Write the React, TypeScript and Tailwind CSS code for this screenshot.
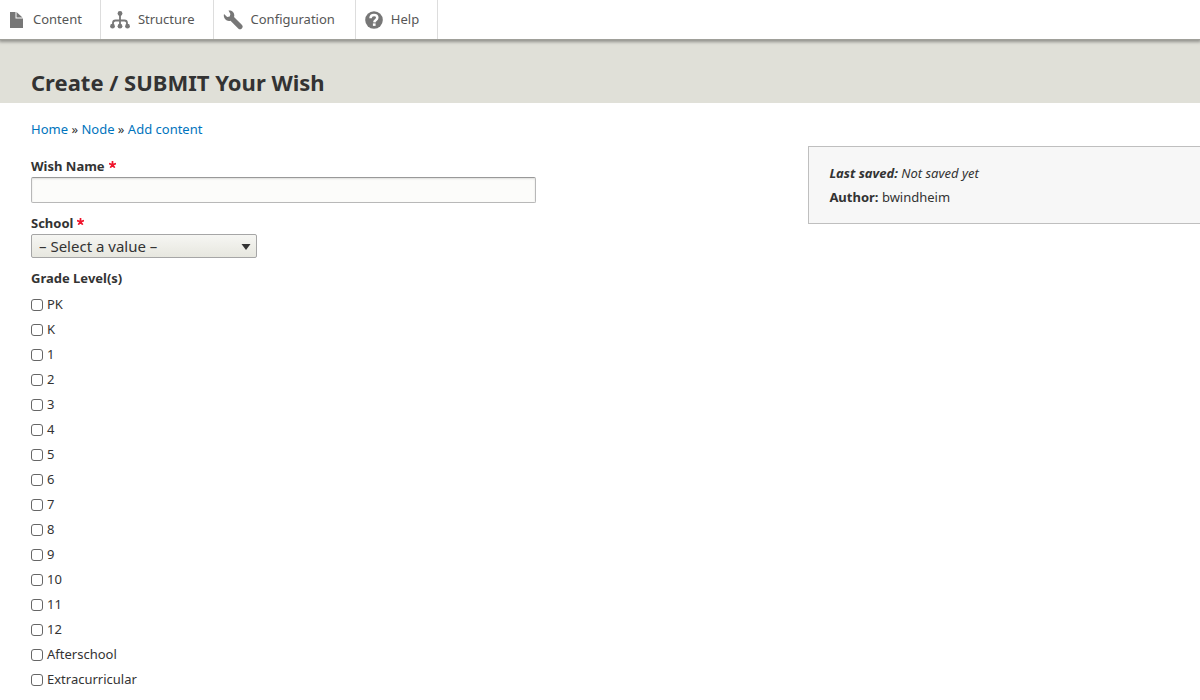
import React, { useState } from "react";

const gradeLevels = [
    "PK", "K", "1", "2", "3", "4", "5", "6", "7", "8", "9", "10", "11", "12",
    "Afterschool", "Extracurricular",
];

function FileIcon() {
    return (
        <svg width="14" height="18" viewBox="0 0 14 18" fill="#777" aria-hidden="true">
            <path d="M1 1h5.500v6.500H14V17H1z" />
            <path d="M7.500 1 13.500 6.500h-6z" />
        </svg>
    );
}

function StructureIcon() {
    return (
        <svg width="20" height="18" viewBox="0 0 20 18" fill="#777" aria-hidden="true">
            <path d="M10 3v12M3 15v-3q0-2.500 2.500-2.500h9q2.500 0 2.500 2.500v3" fill="none" stroke="#777" strokeWidth="1.800" />
            <circle cx="10" cy="2.500" r="2.400" />
            <circle cx="2.500" cy="15.200" r="2.400" />
            <circle cx="10" cy="15.200" r="2.400" />
            <circle cx="17.500" cy="15.200" r="2.400" />
        </svg>
    );
}

function WrenchIcon() {
    return (
        <svg width="20" height="20" viewBox="0 0 20 20" aria-hidden="true">
            <path
                d="M5.500.6C8.500.1 11.200 2.200 11.300 5.200c0 .7-.1 1.200-.3 1.800l7.800 7.800a2.500 2.500 0 0 1-3.600 3.600L7.500 10.700C4.200 11.800.8 9.200.8 5.600c0-.6.1-1.100.2-1.600l3.200 3.100 2.500-.6.700-2.600z"
                fill="#777"
            />
        </svg>
    );
}

function HelpIcon() {
    return (
        <svg width="18" height="18" viewBox="0 0 18 18" aria-hidden="true">
            <circle cx="9" cy="9" r="8.800" fill="#777" />
            <path d="M5.500 7.200C5.600 5 7 4 9 4c2 0 3.300 1.100 3.300 2.700 0 2.300-2.800 2.200-3 4.600" fill="none" stroke="#fff" strokeWidth="2.500" />
            <path d="M7.900 12.400h2.700v2.500H7.900z" fill="#fff" />
        </svg>
    );
}

function Required() {
    return (
        <svg className="inline-block ml-1 mb-1.5" width="7" height="7" viewBox="0 0 7 7" role="img" aria-label="required">
            <path d="M3.500 3.700V0M3.500 3.700 0 2.500M3.500 3.700 7 2.500M3.500 3.700 1.300 6.700M3.500 3.700 5.700 6.700" stroke="#f0142c" strokeWidth="1.700" />
        </svg>
    );
}

function ToolbarLink({ icon, label, className }) {
    return (
        <a href="#" className={`flex items-center pl-[9px] border-r border-[#ddd] text-[#565656] ${className}`}>
            {icon}
            <span>{label}</span>
        </a>
    );
}

export default function App() {
    const [wishName, setWishName] = useState("");
    const [grades, setGrades] = useState([]);

    const toggleGrade = (grade) => {
        setGrades(grades.includes(grade) ? grades.filter((g) => g !== grade) : [...grades, grade]);
    };

    return (
        <div className="min-h-screen overflow-hidden bg-white font-['Noto_Sans','Lucida_Grande',sans-serif] text-[13px] text-[#333]">
            <nav className="relative flex h-10 bg-white border-b border-[#a0a09a] shadow-[0_1px_3px_1px_rgba(0,0,0,0.35)]">
                <ToolbarLink icon={<FileIcon />} label="Content" className="gap-2.5 pr-[18px]" />
                <ToolbarLink icon={<StructureIcon />} label="Structure" className="gap-2 pr-[18px]" />
                <ToolbarLink icon={<WrenchIcon />} label="Configuration" className="gap-2 pr-5" />
                <ToolbarLink icon={<HelpIcon />} label="Help" className="gap-2 pr-[18px]" />
            </nav>

            <header className="bg-[#e0e0d8] px-[31px] pt-[27px] pb-[5px]">
                <h1 className="text-[22px] leading-[31px] font-bold">Create / SUBMIT Your Wish</h1>
            </header>

            <nav aria-label="Breadcrumb" className="px-[31px] pt-4 leading-5">
                <a href="#" className="text-[#0074bd]">Home</a> »{" "}
                <a href="#" className="text-[#0074bd]">Node</a> »{" "}
                <a href="#" className="text-[#0074bd]">Add content</a>
            </nav>

            <form className="flex items-start pl-[31px] pt-[7px]">
                <div className="w-[66.5%] pt-[10px]">
                    <div>
                        <label htmlFor="wish-name" className="block pb-px leading-5 font-bold">Wish Name<Required /></label>
                        <input
                            id="wish-name"
                            type="text"
                            value={wishName}
                            onChange={(e) => setWishName(e.target.value)}
                            className="block w-[65%] h-[26px] px-2 rounded-xs border border-[#b8b8b8] border-t-[#999] bg-[#fcfcfa] shadow-[inset_0_1px_2px_rgba(0,0,0,0.125)]"
                        />
                    </div>

                    <div className="pt-2.5">
                        <label htmlFor="school" className="block pb-px leading-5 font-bold">School<Required /></label>
                        <div className="relative w-[226px]">
                            <select
                                id="school"
                                className="block w-full h-6 pl-[7px] pr-6 appearance-none rounded-xs border border-[#a6a6a6] bg-linear-to-b from-[#f6f6f3] to-[#e7e7df] text-[15px] leading-5"
                            >
                                <option>– Select a value –</option>
                            </select>
                            <svg className="absolute right-1.5 top-2.5 pointer-events-none" width="10" height="6" viewBox="0 0 10 6" aria-hidden="true">
                                <path d="M.5 0h9L5 6z" fill="#333" />
                            </svg>
                        </div>
                    </div>

                    <fieldset className="mt-2.5">
                        <legend className="pb-1 leading-5 font-bold">Grade Level(s)</legend>
                        {gradeLevels.map((grade) => (
                            <label key={grade} className="flex items-center gap-1 leading-[25px]">
                                <input
                                    type="checkbox"
                                    checked={grades.includes(grade)}
                                    onChange={() => toggleGrade(grade)}
                                    className="size-3 appearance-none rounded-[3px] border border-[#666] bg-white checked:bg-[#0074bd]"
                                />
                                {grade}
                            </label>
                        ))}
                    </fieldset>
                </div>

                <aside className="flex-1 border border-r-0 border-[#bfbfbf] bg-[#f7f7f7] px-5 py-3.5 leading-6">
                    <p className="italic"><strong>Last saved:</strong> Not saved yet</p>
                    <p><strong>Author:</strong> bwindheim</p>
                </aside>
            </form>
        </div>
    );
}
